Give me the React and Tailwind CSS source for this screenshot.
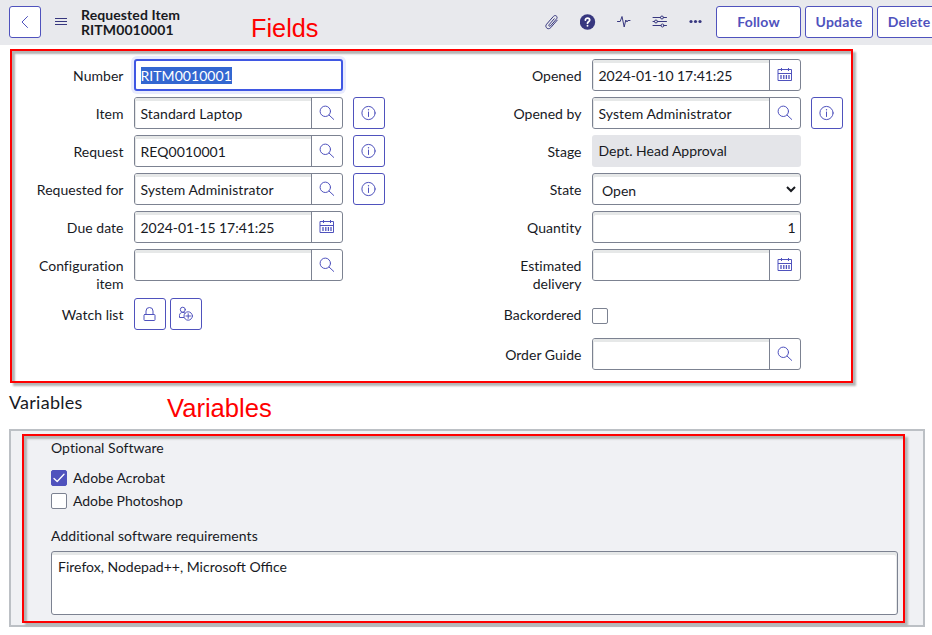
import React from "react";

const svgProps = { fill: "none", stroke: "currentColor", strokeLinecap: "round", strokeLinejoin: "round" };

function SearchIcon() {
  return (
    <svg width="16" height="16" viewBox="0 0 16 16" {...svgProps}>
      <circle cx="6.3" cy="6.3" r="5.2" />
      <path d="M10.1 10.1 14.7 14.4" />
    </svg>
  );
}

function CalendarIcon() {
  return (
    <svg width="16" height="16" viewBox="0 0 16 16" {...svgProps} strokeLinecap="butt">
      <path d="M1 2.5h13.5v11H1zM1 6.500h13.500M4.500 1v3M11.500 1v3" />
      <path d="M4 8v4M6.800 8v4M9.400 8v4M12 8v4" strokeWidth="1.300" />
    </svg>
  );
}

function InfoIcon() {
  return (
    <svg width="16" height="16" viewBox="0 0 16 16" {...svgProps}>
      <circle cx="7.5" cy="8" r="6.6" />
      <path d="M7.5 7v4.5" />
      <path d="M7.5 4.6v.2" strokeWidth="1.3" />
    </svg>
  );
}

function LockIcon() {
  return (
    <svg width="16" height="16" viewBox="0 0 16 16" {...svgProps}>
      <rect x="2" y="8.5" width="11" height="6" rx="0.8" />
      <path d="M4 8.500V5a3.500 3.500 0 0 1 7 0v3.500" />
    </svg>
  );
}

function AddUserIcon() {
  return (
    <svg width="16" height="16" viewBox="0 0 16 16" {...svgProps}>
      <circle cx="4.8" cy="3.7" r="2.5" />
      <path d="M5.600 11.500H1.500V9.400c0-1.900 1.400-3 3.300-3 .9 0 1.600.2 2.100.6" />
      <circle cx="10.2" cy="10" r="4.2" />
      <path d="M10.200 7.700v4.600M7.900 10h4.600" />
    </svg>
  );
}

function Label({ children }) {
  return <div className="-ml-[0.5px] mr-[0.5px] w-[92px] pt-2 text-right leading-[18px] tracking-[0.03px]">{children}</div>;
}

function InfoButton() {
  return (
    <button className="ml-[10px] flex h-8 w-8 justify-center rounded-[3px] border border-[#4f52bd] pt-[7px] text-[#4f52bd]">
      <InfoIcon />
    </button>
  );
}

function Field({ label, value = "", icon, info, height = "h-8" }) {
  return (
    <div className={`flex items-start ${height}`}>
      <Label>{label}</Label>
      <div className="ml-[10px] flex h-8 w-[209px] overflow-hidden rounded-[3px] border border-[#7c8291]">
        <div className={`flex-1 pl-[5.5px] leading-[32px] shadow-[inset_1px_3px_0_#e6e8e8] ${icon === "search" ? "tracking-[0.08px]" : "tracking-[-0.04px]"}`}>{value}</div>
        <div className="flex w-[31px] justify-center border-l border-[#7c8291] pt-[7px] text-[#4f52bd]">
          {icon === "search" ? <SearchIcon /> : <CalendarIcon />}
        </div>
      </div>
      {info && <InfoButton />}
    </div>
  );
}

function HeaderIcons() {
  return (
    <div className="flex items-center gap-5 text-[#37377f]">
      <svg width="16" height="16" viewBox="0 0 16 16" {...svgProps}>
        <path d="M10.200 4.800 5.100 10.700c-.9 1.100.5 2.200 1.400 1.200l6-7c1.900-2.200-1.200-4.700-3.100-2.500L2.600 10.200c-2.500 3 1.700 6.300 4.200 3.400l6.400-7.400" />
      </svg>
      <svg width="16" height="16" viewBox="0 0 16 16" {...svgProps}>
        <circle cx="7.5" cy="8" r="7.7" fill="currentColor" stroke="none" />
        <path d="M5.400 6.100c0-2.700 4.300-2.600 4.300 0C9.700 7.700 7.500 7.700 7.500 9.200" stroke="#fff" strokeWidth="1.8" />
        <path d="M7.500 11.700v.1" stroke="#fff" strokeWidth="1.9" />
      </svg>
      <svg width="16" height="16" viewBox="0 0 16 16" {...svgProps}>
        <path d="M1.500 7.500h2.700L6 2.500 8.200 13 9.800 6l1.200 2 .8-1.500H14" />
      </svg>
      <svg width="16" height="16" viewBox="0 0 16 16" {...svgProps}>
        <path d="M1 3.500h7.500M11.500 3.500h3M1 7.500h1.500M5.500 7.500h9M1 11.500h8M12 11.500h2.500" />
        <circle cx="10" cy="3.5" r="1.5" />
        <circle cx="4" cy="7.5" r="1.5" />
        <circle cx="10.5" cy="11.5" r="1.5" />
      </svg>
      <svg width="16" height="16" viewBox="0 0 16 16" fill="currentColor">
        <circle cx="3" cy="7.5" r="1.6" />
        <circle cx="7.5" cy="7.5" r="1.6" />
        <circle cx="12" cy="7.5" r="1.6" />
      </svg>
    </div>
  );
}

function HeaderButton({ width, children }) {
  return (
    <button className={`h-8 shrink-0 rounded-[3px] border border-[#4f52bd] bg-white pb-[2px] text-[14px] font-bold tracking-[0.2px] text-[#4f52bd] ${width}`}>
      {children}
    </button>
  );
}

function CheckBox({ checked }) {
  return (
    <span className={`flex h-4 w-4 items-center justify-center rounded-[2px] border ${checked ? "border-[#4f52bd] bg-[#4f52bd]" : "border-[#7c8291] bg-white"}`}>
      {checked && (
        <svg width="14" height="14" viewBox="0 0 14 14" {...svgProps} stroke="#fff" strokeWidth="1.3" className="shrink-0">
          <path d="m2 7.500 3.200 3L12 3.300" />
        </svg>
      )}
    </span>
  );
}

export default function App() {
  return (
    <div className="relative h-[635px] w-[932px] overflow-hidden bg-white font-['Lato',sans-serif] text-[14px] text-[#181a1f]">
      <header className="flex h-[45px] items-start bg-[#e8e9ed] pl-[9px] pt-[6px]">
        <button className="flex h-8 w-8 shrink-0 items-center justify-center rounded-[3px] border border-[#4f52bd] bg-white text-[#4f52bd]">
          <svg width="16" height="16" viewBox="0 0 16 16" {...svgProps}>
            <path d="M10.500 2.500 5 8l5.500 5.500" />
          </svg>
        </button>
        <svg width="12" height="16" viewBox="0 0 12 16" className="ml-[14px] mt-[7px] shrink-0 text-[#37377f]" {...svgProps} strokeLinecap="butt">
          <path d="M0 5.500h12M0 8.500h12M0 11.500h12" />
        </svg>
        <h1 className="ml-[14px] mt-[1px] w-[120px] shrink-0 text-[14px] font-bold leading-[15px] tracking-[0.1px]">
          Requested Item
          <br />
          RITM0010001
        </h1>
        <div className="ml-[343px] mt-[8px] w-[172px] shrink-0">
          <HeaderIcons />
        </div>
        <div className="flex shrink-0 gap-1">
          <HeaderButton width="w-[85px]">Follow</HeaderButton>
          <HeaderButton width="w-[68px]">Update</HeaderButton>
          <HeaderButton width="w-[64px]">Delete</HeaderButton>
        </div>
      </header>

      <section className="ml-[10px] mt-1 flex h-[334px] w-[843px] border-2 border-[#ff0000] pl-5 pt-2 shadow-[3px_3px_2px_#b4b4b4,inset_3px_3px_2px_#b4b4b4]">
        <div className="flex w-[458px] flex-col gap-[6px]">
          <div className="flex h-8 items-start">
            <Label>Number</Label>
            <div className="ml-[10px] h-8 w-[209px] rounded-[3px] border-2 border-[#3f57e3] bg-white pl-[4.5px] leading-[29px] shadow-[0_0_0_3px_#e8ebfd]">
              <span className="bg-[#3367d1] tracking-[0.05px] text-white">RITM0010001</span>
            </div>
          </div>
          <Field label="Item" value="Standard Laptop" icon="search" info />
          <Field label="Request" value="REQ0010001" icon="search" info />
          <Field label="Requested for" value="System Administrator" icon="search" info />
          <Field label="Due date" value="2024-01-15 17:41:25" icon="calendar" />
          <Field label="Configuration item" icon="search" height="h-[43px]" />
          <div className="flex items-start">
            <Label>Watch list</Label>
            <div className="ml-[10px] flex gap-1 text-[#4f52bd]">
              <button className="flex h-8 w-8 items-center justify-center rounded-[3px] border border-[#4f52bd]">
                <LockIcon />
              </button>
              <button className="flex h-8 w-8 items-center justify-center rounded-[3px] border border-[#4f52bd]">
                <AddUserIcon />
              </button>
            </div>
          </div>
        </div>

        <div className="flex flex-col gap-[6px]">
          <Field label="Opened" value="2024-01-10 17:41:25" icon="calendar" />
          <Field label="Opened by" value="System Administrator" icon="search" info />
          <div className="flex h-8 items-start">
            <Label>Stage</Label>
            <div className="ml-[10px] h-8 w-[209px] rounded-[3px] bg-[#e4e5e9] pl-[6.5px] leading-[32px]">Dept. Head Approval</div>
          </div>
          <div className="flex h-8 items-start">
            <Label>State</Label>
            <div className="ml-[10px] flex h-8 w-[209px] items-center justify-between rounded-[3px] border border-[#7c8291] pl-[9px] pr-1 shadow-[inset_1px_3px_0_#e6e8e8]">
              <span className="mt-[2px]">Open</span>
              <svg width="10" height="8" viewBox="0 0 10 8" fill="none" stroke="#181a1f" strokeWidth="2">
                <path d="m1 2 4 4 4-4" />
              </svg>
            </div>
          </div>
          <div className="flex h-8 items-start">
            <Label>Quantity</Label>
            <div className="ml-[10px] h-8 w-[209px] rounded-[3px] border border-[#7c8291] pr-[4.5px] text-right leading-[32px] shadow-[inset_1px_3px_0_#e6e8e8]">1</div>
          </div>
          <Field label="Estimated delivery" icon="calendar" height="h-[43px]" />
          <div className="flex h-[34px] items-start">
            <Label>Backordered</Label>
            <div className="ml-[10px] mt-[10px]">
              <CheckBox />
            </div>
          </div>
          <Field label="Order Guide" icon="search" />
        </div>
      </section>

      <h2 className="ml-[9px] mt-[8px] h-[38px] w-[120px] text-[18px] leading-[22px] tracking-[0.25px]">Variables</h2>

      <section className="ml-[9px] h-[198px] w-[916px] border-2 border-[#bcc0c5] bg-[#f0f1f4] pl-[11px] pt-[3px]">
        <div className="h-[189px] w-[883px] border-2 border-[#ff0000] pl-[27px] pt-[3px] shadow-[3px_3px_2px_#b4b4b4,inset_3px_3px_2px_#b4b4b4]">
          <div className="leading-[18px] tracking-[0.03px]">Optional Software</div>
          <div className="mt-[13px] flex h-4 items-center gap-[6px]">
            <CheckBox checked />
            <span className="-mt-px">Adobe Acrobat</span>
          </div>
          <div className="mt-[7px] flex h-4 items-center gap-[6px]">
            <CheckBox />
            <span className="-mt-px tracking-[-0.05px]">Adobe Photoshop</span>
          </div>
          <div className="mt-[18px] leading-[18px] tracking-[0.06px]">Additional software requirements</div>
          <div className="mt-[6px] h-16 w-[847px] rounded-[3px] border border-[#7c8291] bg-white pl-[6px] pt-[6px] leading-[18px] shadow-[inset_-1px_3px_0_#e6e8e8]">
            Firefox, Nodepad++, Microsoft Office
          </div>
        </div>
      </section>

      <div className="absolute left-[251px] top-[14px] font-['Liberation_Sans',sans-serif] text-[25.3px] leading-[28px] text-[#ff0000]">Fields</div>
      <div className="absolute left-[167px] top-[394px] font-['Liberation_Sans',sans-serif] text-[25.6px] leading-[28px] text-[#ff0000]">Variables</div>
    </div>
  );
}
